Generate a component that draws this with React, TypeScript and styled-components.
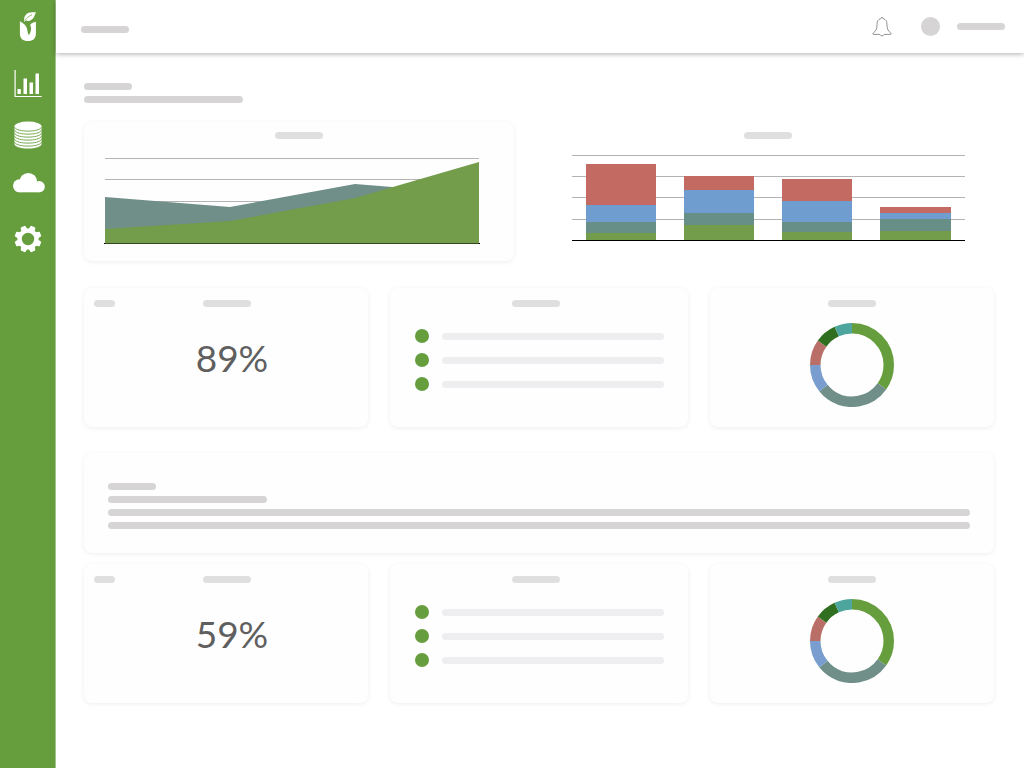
import React from "react";
import styled, { createGlobalStyle } from "styled-components";

const color = {
  brand: "#669e3e",
  brandEdge: "#a3c58b",
  pill: "#d6d4d5",
  pillSoft: "#dfdfdf",
  pillFaint: "#eeeef0",
  red: "#c36b63",
  blue: "#6f9dd0",
  slate: "#688f87",
  leaf: "#739c4b",
  grid: "#b3b3b3",
};

const GlobalStyle = createGlobalStyle`
  * { box-sizing: border-box; }
  body { margin: 0; background: #fff; font-family: Lato, "Liberation Sans", sans-serif; color: #5f5f5f; }
  h1, p, ul { margin: 0; padding: 0; }
  ul { list-style: none; }
`;

const Shell = styled.div`
  display: grid;
  grid-template-columns: 56px minmax(0, 1fr);
  min-height: 100vh;
`;

const Sidebar = styled.nav`
  display: flex;
  flex-direction: column;
  align-items: center;
  padding-top: 12px;
  background: ${color.brand};
  border-right: 1px solid ${color.brandEdge};
`;

const LogoLink = styled.a`
  display: block;
  height: 30px;
  margin-bottom: 27px;
`;

const NavList = styled.ul`
  display: grid;
  gap: 24px;
`;

const NavLink = styled.a`
  display: flex;
  justify-content: center;
  width: 34px;
  height: 28px;
`;

const Page = styled.div`
  min-width: 0;
`;

const TopBar = styled.header`
  display: flex;
  align-items: center;
  justify-content: space-between;
  height: 53px;
  padding: 0 19px 0 25px;
  background: #fff;
  box-shadow: 0 1px 5px rgba(0, 0, 0, 0.32);
`;

const Breadcrumb = styled.div`
  padding-top: 6px;
`;

const Account = styled.div`
  display: flex;
  align-items: center;
`;

const BellButton = styled.button`
  display: block;
  width: 20px;
  height: 20px;
  margin-right: 29px;
  padding: 0;
  border: 0;
  background: none;
`;

const Avatar = styled.span`
  width: 19px;
  height: 19px;
  margin-right: 17px;
  border-radius: 50%;
  background: ${color.pill};
`;

const Pill = styled.div<{ $width?: number; $tone?: string }>`
  width: ${(p) => (p.$width ? `${p.$width}px` : "100%")};
  height: 7px;
  border-radius: 4px;
  background: ${(p) => p.$tone ?? color.pill};
`;

const Content = styled.main`
  padding: 30px 30px 24px 28px;
`;

const TextLines = styled.div`
  display: grid;
  gap: 6px;
`;

const ChartRow = styled.section`
  display: grid;
  grid-template-columns: 430fr 452fr;
  gap: 28px;
  margin-top: 19px;
`;

const CardRow = styled.section<{ $top: number }>`
  display: grid;
  grid-template-columns: 284fr 298fr 284fr;
  gap: 22px;
  margin-top: ${(p) => p.$top}px;
`;

const Card = styled.article`
  min-height: 139px;
  border-radius: 8px;
  background: #fefefe;
  box-shadow: 0 1px 5px rgba(0, 0, 0, 0.07);
`;

const ChartPanel = styled.article`
  min-height: 139px;
`;

const ChartTitle = styled.div`
  display: flex;
  justify-content: center;
  padding-top: 10px;
`;

const Plot = styled.div<{ $padding: string }>`
  padding: ${(p) => p.$padding};

  svg {
    display: block;
    width: 100%;
    height: 86px;
  }
`;

const CardHead = styled.div<{ $padding?: string }>`
  display: grid;
  grid-template-columns: 1fr auto 1fr;
  padding: ${(p) => p.$padding ?? "12px 0 0"};
`;

const HeadTitle = styled(Pill)`
  grid-column: 2;
`;

const Percent = styled.p`
  padding: 27px 0 0 12px;
  font-size: 37px;
  line-height: 48px;
  text-align: center;
`;

const StatusList = styled.ul`
  display: grid;
  gap: 10px;
  padding: 22px 24px 0 25px;
`;

const StatusItem = styled.li`
  display: grid;
  grid-template-columns: 14px 1fr;
  gap: 13px;
  align-items: center;
`;

const Dot = styled.span`
  height: 14px;
  border-radius: 50%;
  background: ${color.brand};
`;

const Ring = styled.div`
  display: flex;
  justify-content: center;
  padding-top: 16px;
`;

const NoticeCard = styled(Card)`
  min-height: 100px;
  margin-top: 26px;
  padding: 30px 24px 24px;
`;

const Logo = () => (
  <svg width="18" height="30" viewBox="0 0 18 30" fill="#fff" aria-hidden="true">
    <path d="M5.200 7.600C5 4 7.500 1 11 .5 13 .1 15 .3 17 .2 16.200 1.500 15.900 3 15.100 4.800 13.500 8.300 10 9.800 6.600 8.600L5.200 10Z" />
    <path d="M6 8.600C7.700 6 9.900 4 13 2.700" fill="none" stroke={color.brand} strokeWidth=".7" />
    <path d="M.9 9.300C4.300 11.300 7 13 8 16.500 8.400 19.200 8.900 21.400 9.800 23.200 12 20.300 12.800 16.400 11.200 12.700 12.700 11 14.600 10.500 16.900 9.800V21.500C16.900 26.600 14 29 9 29 3.900 29 .9 26.600.9 21.500Z" />
  </svg>
);

const BarsIcon = () => (
  <svg width="28" height="28" viewBox="0 0 28 28" fill="#fff" aria-hidden="true">
    <path d="M.5 1h1.200v26h26v1H.5zM3.500 20h3.300v5H3.500zM9.500 9.500h3.500V25H9.500zM15.500 13.500h3.500V25h-3.500zM21.500 4.500h3.500V25h-3.500z" />
  </svg>
);

const StackIcon = () => (
  <svg width="28" height="28" viewBox="0 0 28 28" aria-hidden="true">
    <path d="M.5 5.200V23C.5 25.500 6.500 27.500 14 27.500S27.500 25.500 27.500 23V5.200Z" fill="#fff" />
    <ellipse cx="14" cy="5.200" rx="13.500" ry="4.700" fill="#fff" />
    {[6.2, 9.2, 12.2, 15.2, 18.2, 21.2].map((y) => (
      <path
        key={y}
        d={`M.5 ${y}C2 ${y + 2.900} 8 ${y + 3.900} 14 ${y + 3.900}S26 ${y + 2.900} 27.500 ${y}`}
        fill="none"
        stroke={color.brand}
        strokeWidth=".9"
      />
    ))}
  </svg>
);

const CloudIcon = () => (
  <svg width="34" height="20" viewBox="-2 0 34 20" fill="#fff" aria-hidden="true">
    <circle cx="6.500" cy="12.800" r="6.500" />
    <circle cx="15.300" cy="8.900" r="8.900" />
    <circle cx="26.200" cy="13.700" r="5.600" />
    <path d="M6.500 10H26.200V19.300H6.500Z" />
  </svg>
);

const GearIcon = () => (
  <svg width="28" height="28" viewBox="-14 -14 28 28" fill="#fff" aria-hidden="true">
    <circle r="8.400" fill="none" stroke="#fff" strokeWidth="4.400" />
    {[0, 1, 2, 3, 4, 5, 6, 7].map((n) => (
      <path
        key={n}
        d="M-3.400-8.500L-2.600-12.800Q-2.400-13.500-1.700-13.500H1.700Q2.400-13.500 2.600-12.800L3.400-8.500Z"
        transform={`rotate(${n * 45 + 22.5})`}
      />
    ))}
  </svg>
);

const BellIcon = () => (
  <svg width="20" height="20" viewBox="0 0 20 20" fill="none" stroke="#777" strokeWidth=".8" aria-hidden="true">
    <path d="M8.800 1.600Q8.800.5 10 .5T11.200 1.600C14 2.400 15 4.500 15 7.500 15 12 16 14 18.800 16 19.500 16.700 19.300 17.400 18.300 17.400H12.200Q11.500 18.900 10 18.900T7.800 17.400H1.700C.7 17.400.5 16.700 1.200 16 4 14 5 12 5 7.500 5 4.500 6 2.400 8.800 1.600Z" />
  </svg>
);

const AreaChart = () => (
  <svg viewBox="0 0 376 86" preserveAspectRatio="none" role="img" aria-label="Area chart">
    {[0, 21, 43, 64].map((y) => (
      <rect key={y} x="1" y={y} width="374" height="1" fill={color.grid} />
    ))}
    <polygon points="1,39 126,49 251,26 375,36 375,85 1,85" fill="#6f8f88" />
    <polygon points="1,71 126,63 251,40 375,4 375,85 1,85" fill={color.leaf} />
    <rect x="0" y="85" width="376" height="1" />
    <rect x="1" y="85" width="374" height="1" fill="#344622" />
  </svg>
);

/* Each bar lists the top edge of its red, blue, slate and green parts. */
const bars = [
  { x: 14, width: 70, tops: [9, 50, 67, 78] },
  { x: 112, width: 70, tops: [21, 35, 58, 70] },
  { x: 210, width: 70, tops: [24, 46, 67, 77] },
  { x: 308, width: 71, tops: [52, 58, 64, 76] },
];
const barColors = [color.red, color.blue, color.slate, color.leaf];

const StackedBars = () => (
  <svg viewBox="0 0 393 86" preserveAspectRatio="none" shapeRendering="crispEdges" role="img" aria-label="Stacked bar chart">
    {[0, 21, 42, 64].map((y) => (
      <rect key={y} y={y} width="393" height="1" fill={color.grid} />
    ))}
    {bars.map((bar) =>
      bar.tops.map((top, i) => (
        <rect key={`${bar.x}-${top}`} x={bar.x} y={top} width={bar.width} height={85 - top} fill={barColors[i]} />
      ))
    )}
    <rect y="85" width="393" height="1" />
  </svg>
);

const slices = [
  { from: 0, to: 125.5, fill: "#669e3e" },
  { from: 125.5, to: 231, fill: "#6f8f88" },
  { from: 231, to: 270, fill: "#789dce" },
  { from: 270, to: 305.5, fill: "#b96f67" },
  { from: 305.5, to: 335.5, fill: "#2f6f1f" },
  { from: 335.5, to: 360, fill: "#4ca69d" },
];

const Donut = () => (
  <svg width="84" height="84" viewBox="-42 -42 84 84" role="img" aria-label="Share chart">
    {slices.map((s) => (
      <circle
        key={s.from}
        r="36.750"
        fill="none"
        stroke={s.fill}
        strokeWidth="10.500"
        pathLength={360}
        strokeDasharray={`${s.to - s.from} 360`}
        transform={`rotate(${s.from - 90})`}
      />
    ))}
  </svg>
);

const navItems = [
  { label: "Reports", icon: <BarsIcon /> },
  { label: "Data", icon: <StackIcon /> },
  { label: "Cloud", icon: <CloudIcon /> },
  { label: "Settings", icon: <GearIcon /> },
];

const SummaryRow = ({ percent, top }: { percent: string; top: number }) => (
  <CardRow $top={top}>
    <Card>
      <CardHead $padding="12px 8px 0 10px">
        <Pill $width={21} $tone={color.pillSoft} />
        <HeadTitle $width={48} $tone={color.pillSoft} />
      </CardHead>
      <Percent>{percent}</Percent>
    </Card>
    <Card>
      <CardHead $padding="12px 7px 0 0">
        <HeadTitle $width={48} $tone={color.pillSoft} />
      </CardHead>
      <StatusList>
        {[1, 2, 3].map((n) => (
          <StatusItem key={n}>
            <Dot />
            <Pill $tone={color.pillFaint} />
          </StatusItem>
        ))}
      </StatusList>
    </Card>
    <Card>
      <CardHead>
        <HeadTitle $width={48} $tone={color.pillSoft} />
      </CardHead>
      <Ring>
        <Donut />
      </Ring>
    </Card>
  </CardRow>
);

export default function App() {
  return (
    <>
      <GlobalStyle />
      <Shell>
        <Sidebar aria-label="Main">
          <LogoLink href="#home" aria-label="Home">
            <Logo />
          </LogoLink>
          <NavList>
            {navItems.map((item) => (
              <li key={item.label}>
                <NavLink href={`#${item.label.toLowerCase()}`} aria-label={item.label}>
                  {item.icon}
                </NavLink>
              </li>
            ))}
          </NavList>
        </Sidebar>
        <Page>
          <TopBar>
            <Breadcrumb>
              <Pill $width={48} />
            </Breadcrumb>
            <Account>
              <BellButton type="button" aria-label="Notifications">
                <BellIcon />
              </BellButton>
              <Avatar />
              <Pill $width={48} />
            </Account>
          </TopBar>
          <Content>
            <TextLines>
              <Pill $width={48} />
              <Pill $width={159} />
            </TextLines>
            <ChartRow>
              <Card>
                <ChartTitle>
                  <Pill $width={48} $tone={color.pillSoft} />
                </ChartTitle>
                <Plot $padding="19px 34px 0 20px">
                  <AreaChart />
                </Plot>
              </Card>
              <ChartPanel>
                <ChartTitle>
                  <Pill $width={48} $tone={color.pillSoft} />
                </ChartTitle>
                <Plot $padding="16px 29px 0 30px">
                  <StackedBars />
                </Plot>
              </ChartPanel>
            </ChartRow>
            <SummaryRow percent="89%" top={27} />
            <NoticeCard>
              <TextLines>
                <Pill $width={48} />
                <Pill $width={159} />
                <Pill />
                <Pill />
              </TextLines>
            </NoticeCard>
            <SummaryRow percent="59%" top={11} />
          </Content>
        </Page>
      </Shell>
    </>
  );
}
